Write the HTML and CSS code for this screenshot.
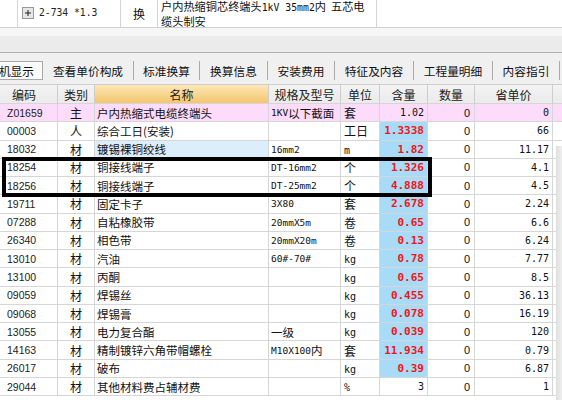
FILE: index.html
```html
<!DOCTYPE html>
<html lang="zh-CN">
<head>
<meta charset="utf-8">
<title>定额子目</title>
<link rel="stylesheet" href="styles.css">
</head>
<body>
<div class="top">
  <div class="c c1"></div>
  <div class="c c2">
    <svg class="exp" width="12" height="12" viewBox="0 0 12 12"><rect x="0.5" y="0.5" width="11" height="11" fill="#e6e6e6" stroke="#9a9a9a"/><path d="M3 6h6M6 3v6" stroke="#202020" stroke-width="1"/></svg>
    <span class="mono">2-734 *1.3</span>
  </div>
  <div class="c c3">换</div>
  <div class="c c4"><div class="desc">户内热缩铜芯终端头<span class="mono">1kV 35mm2</span>内&nbsp;&nbsp;五芯电<br>缆头制安</div></div>
  <div class="c c5"></div>
</div>
<div class="band"></div>
<div class="tabs">
  <div class="tab sel">机显示</div>
  <div class="tab w90">查看单价构成</div>
  <div class="tab sep w66">标准换算</div>
  <div class="tab sep w68">换算信息</div>
  <div class="tab sep w67">安装费用</div>
  <div class="tab sep w79">特征及内容</div>
  <div class="tab sep w79">工程量明细</div>
  <div class="tab sep w67">内容指引</div>
  <div class="tab sep rest"></div>
</div>
<div class="grid">
  <div class="row head">
    <div class="h hcode">编码</div><div class="h">类别</div><div class="h hname">名称</div><div class="h">规格及型号</div><div class="h">单位</div><div class="h">含量</div><div class="h">数量</div><div class="h">省单价</div><div class="h"></div>
  </div>
  <div class="row pink">
    <div class="code">Z01659</div><div class="cat">主</div><div class="name">户内热缩式电缆终端头</div><div class="spec"><span>1KV</span>以下截面</div><div class="unit">套</div><div class="qty">1.02</div><div class="num">0</div><div class="price">0</div><div></div>
  </div>
  <div class="row">
    <div class="code">00003</div><div class="cat">人</div><div class="name">综合工日(安装)</div><div class="spec"></div><div class="unit">工日</div><div class="qty hl">1.3338</div><div class="num">0</div><div class="price">66</div><div></div>
  </div>
  <div class="row">
    <div class="code">18032</div><div class="cat">材</div><div class="name selc">镀锡裸铜绞线</div><div class="spec">16mm2</div><div class="unit m">m</div><div class="qty hl">1.82</div><div class="num">0</div><div class="price">11.17</div><div></div>
  </div>
  <div class="row">
    <div class="code">18254</div><div class="cat">材</div><div class="name">铜接线端子</div><div class="spec">DT-16mm2</div><div class="unit">个</div><div class="qty hl">1.326</div><div class="num">0</div><div class="price">4.1</div><div></div>
  </div>
  <div class="row">
    <div class="code">18256</div><div class="cat">材</div><div class="name">铜接线端子</div><div class="spec">DT-25mm2</div><div class="unit">个</div><div class="qty hl">4.888</div><div class="num">0</div><div class="price">4.5</div><div></div>
  </div>
  <div class="row">
    <div class="code">19711</div><div class="cat">材</div><div class="name">固定卡子</div><div class="spec">3X80</div><div class="unit">套</div><div class="qty hl">2.678</div><div class="num">0</div><div class="price">2.24</div><div></div>
  </div>
  <div class="row">
    <div class="code">07288</div><div class="cat">材</div><div class="name">自粘橡胶带</div><div class="spec">20mmX5m</div><div class="unit">卷</div><div class="qty hl">0.65</div><div class="num">0</div><div class="price">6.6</div><div></div>
  </div>
  <div class="row">
    <div class="code">26340</div><div class="cat">材</div><div class="name">相色带</div><div class="spec">20mmX20m</div><div class="unit">卷</div><div class="qty hl">0.13</div><div class="num">0</div><div class="price">6.24</div><div></div>
  </div>
  <div class="row">
    <div class="code">13010</div><div class="cat">材</div><div class="name">汽油</div><div class="spec">60#-70#</div><div class="unit m">kg</div><div class="qty hl">0.78</div><div class="num">0</div><div class="price">7.77</div><div></div>
  </div>
  <div class="row">
    <div class="code">13100</div><div class="cat">材</div><div class="name">丙酮</div><div class="spec"></div><div class="unit m">kg</div><div class="qty hl">0.65</div><div class="num">0</div><div class="price">8.5</div><div></div>
  </div>
  <div class="row">
    <div class="code">09059</div><div class="cat">材</div><div class="name">焊锡丝</div><div class="spec"></div><div class="unit m">kg</div><div class="qty hl">0.455</div><div class="num">0</div><div class="price">36.13</div><div></div>
  </div>
  <div class="row">
    <div class="code">09068</div><div class="cat">材</div><div class="name">焊锡膏</div><div class="spec"></div><div class="unit m">kg</div><div class="qty hl">0.078</div><div class="num">0</div><div class="price">16.19</div><div></div>
  </div>
  <div class="row">
    <div class="code">13055</div><div class="cat">材</div><div class="name">电力复合酯</div><div class="spec cjk">一级</div><div class="unit m">kg</div><div class="qty hl">0.039</div><div class="num">0</div><div class="price">120</div><div></div>
  </div>
  <div class="row">
    <div class="code">14163</div><div class="cat">材</div><div class="name">精制镀锌六角带帽螺栓</div><div class="spec">M10X100<span class="cj">内</span></div><div class="unit">套</div><div class="qty hl">11.934</div><div class="num">0</div><div class="price">0.79</div><div></div>
  </div>
  <div class="row">
    <div class="code">26017</div><div class="cat">材</div><div class="name">破布</div><div class="spec"></div><div class="unit m">kg</div><div class="qty hl">0.39</div><div class="num">0</div><div class="price">6.87</div><div></div>
  </div>
  <div class="row">
    <div class="code">29044</div><div class="cat">材</div><div class="name">其他材料费占辅材费</div><div class="spec"></div><div class="unit m">%</div><div class="qty">3</div><div class="num">0</div><div class="price">1</div><div></div>
  </div>
</div>
<div class="mark"></div>
<div class="shade"></div>
</body>
</html>
```

FILE: styles.css
```css
html, body {
  margin: 0;
  padding: 0;
}
body {
  width: 562px;
  height: 400px;
  overflow: hidden;
  position: relative;
  background: #fff;
  color: #111;
  font-family: "Noto Sans CJK SC", "Noto Sans", sans-serif;
  font-size: 11.5px;
}
.mono {
  font-family: "DejaVu Sans Mono", monospace;
  font-size: 9.6px;
}

/* top row */
.top {
  display: flex;
  height: 28px;
  border-bottom: 1px solid #d0d0d0;
  box-sizing: border-box;
  background: #fff;
}
.top .c {
  box-sizing: border-box;
  border-right: 1px solid #d4d4d4;
  display: flex;
  align-items: center;
}
.c1 { width: 18px; }
.c2 { width: 103px; padding-left: 4px; gap: 5px; padding-bottom: 2px; }
.c2 .mono { font-size: 9.7px; color: #222; }
.exp { flex: none; }
.c3 { width: 37px; justify-content: center; font-size: 12px; padding-bottom: 1px; }
.c4 { width: 219px; padding-left: 3px; padding-top: 1.5px; align-items: flex-start; }
.desc { line-height: 13.5px; font-size: 11.2px; white-space: nowrap; }
.desc .mono { font-size: 9.8px; }
.c5 { flex: 1; border-right: none !important; }

/* band */
.band {
  height: 24px;
  background: linear-gradient(#f6f6f6 0, #f6f6f6 8px, #ececec 8px, #ebebeb 100%);
  border-bottom: 1px solid #b4b4b4;
}

/* tabs */
.tabs {
  height: 31px;
  background: #f0f0f0;
  display: flex;
  align-items: flex-start;
  padding-top: 8px;
  box-sizing: border-box;
}
.tab {
  height: 19px;
  box-sizing: border-box;
  display: flex;
  align-items: center;
  justify-content: center;
  white-space: nowrap;
  font-size: 11.7px;
  color: #111;
  flex: none;
}
.tab.sel {
  width: 43px;
  justify-content: flex-end;
  padding-right: 8px;
  border: 1px solid #a8a8a8;
  border-left: none;
  background: #fafafa;
}
.tab.sep { border-left: 1px solid #a9a9a9; }
.w90 { width: 90px; }
.w66 { width: 66px; }
.w67 { width: 67px; }
.w68 { width: 68px; }
.w79 { width: 79px; }
.rest { flex: 1; }

/* grid */
.grid {
  display: grid;
  grid-template-columns: 58px 37px 174px 72px 39px 48px 47px 78px 1fr;
  grid-template-rows: 20px;
  grid-auto-rows: 18.27px;
}
.row { display: contents; }
.row > div {
  box-sizing: border-box;
  border-right: 1px solid #d6d6d6;
  border-bottom: 1px solid #d6d6d6;
  display: flex;
  align-items: center;
  overflow: hidden;
  white-space: nowrap;
}
.row > div:last-child { border-right: none; }
.head > .h {
  border-top: 1px solid #cfcfcf;
  background: linear-gradient(#f3f3f3, #ebebeb);
  justify-content: center;
  font-size: 12px;
  color: #222;
  border-right-color: #cdcdcd;
}
.head > .hcode { justify-content: flex-start; padding-left: 12px; }
.head > .hname { background: linear-gradient(#fde7b6, #f4c66e); }
.pink > div { background: #fcdcfa; }

.code {
  padding-left: 7px;
  font-family: "Liberation Sans", sans-serif;
  font-size: 10.5px;
  color: #222;
}
.cat { justify-content: center; font-size: 12px; }
.name { padding-left: 2px; }
.name.selc { background: #dcedfc; }
.spec {
  padding-left: 2px;
  font-family: "DejaVu Sans Mono", monospace;
  font-size: 9.5px;
}
.spec .cj, .spec.cjk {
  font-family: "Noto Sans CJK SC", sans-serif;
  font-size: 11.5px;
}
.pink .spec {
  font-family: "Noto Sans CJK SC", sans-serif;
  font-size: 11.5px;
}
.pink .spec span {
  font-family: "DejaVu Sans Mono", monospace;
  font-size: 9.5px;
}
.unit { padding-left: 3px; font-size: 12px; }
.unit.m {
  font-family: "DejaVu Sans Mono", monospace;
  font-size: 10px;
  padding-top: 2px;
}
.qty {
  justify-content: flex-end;
  padding-right: 3px;
  font-family: "DejaVu Sans Mono", monospace;
  font-size: 10px;
}
.qty.hl {
  background: #a8dbf7;
  color: #f41414;
  font-weight: bold;
  font-size: 11px;
}
.num {
  justify-content: flex-end;
  padding-right: 4px;
  font-family: "Liberation Sans", sans-serif;
  font-size: 11px;
}
.price {
  justify-content: flex-end;
  padding-right: 3px;
  font-family: "DejaVu Sans Mono", monospace;
  font-size: 10px;
}

/* overlays */
.mark {
  position: absolute;
  left: 2px;
  top: 157px;
  width: 430px;
  height: 40px;
  box-sizing: border-box;
  border: 4px solid #000;
}
.shade {
  position: absolute;
  left: 556px;
  top: 146px;
  width: 6px;
  height: 254px;
  background: linear-gradient(to right, #dedede, #efefef);
}
```
